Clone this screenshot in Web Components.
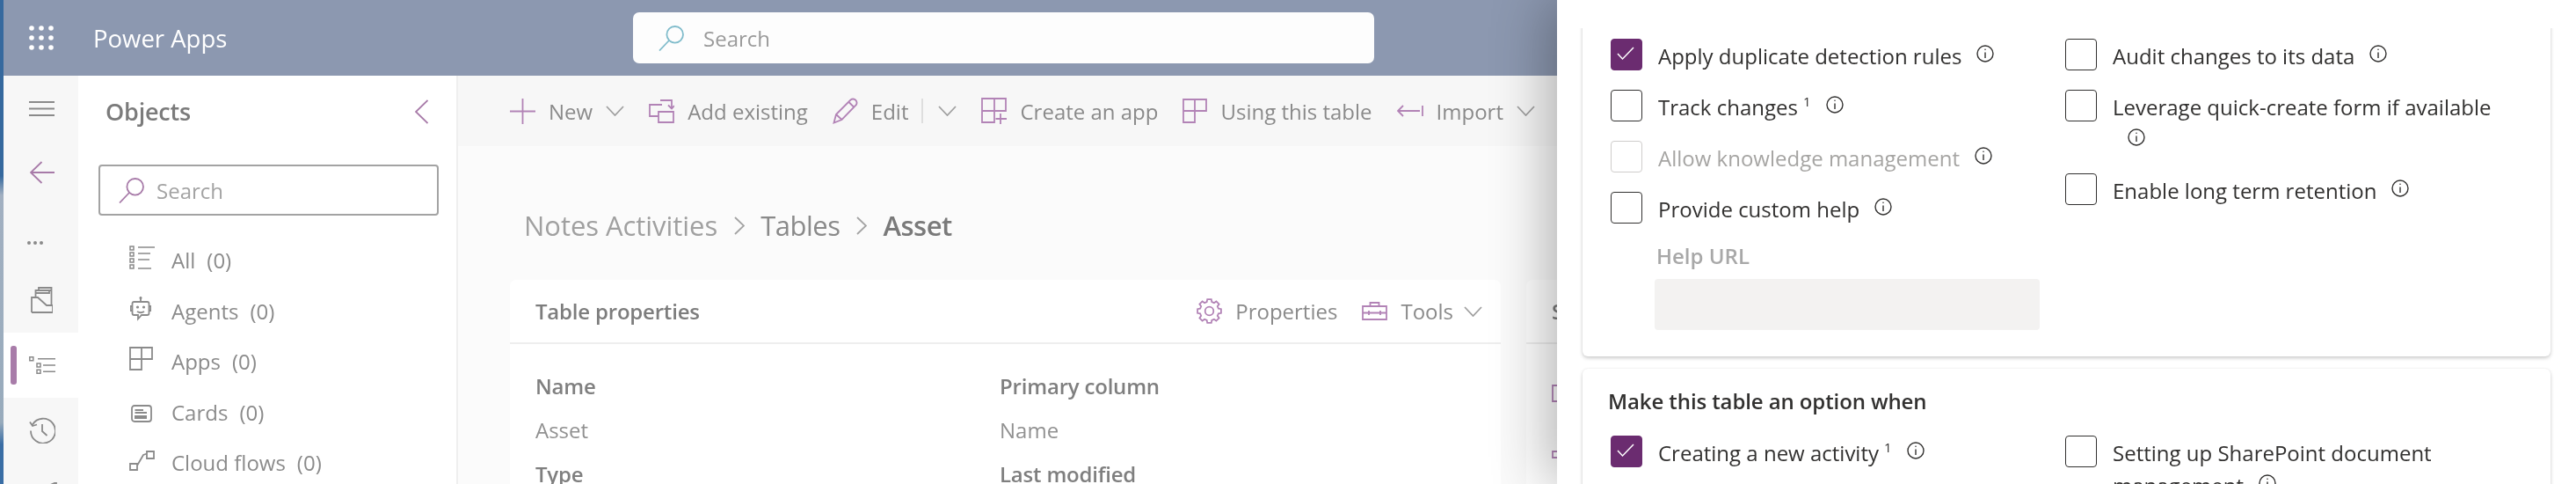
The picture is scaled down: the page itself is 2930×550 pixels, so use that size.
<!DOCTYPE html>
<html lang="en">
<head>
<meta charset="utf-8">
<title>Power Apps</title>
<style>
  html, body { margin: 0; height: 550px; overflow: hidden; background: #fbfbfb; }
  body { font-family: "Open Sans", "Noto Sans", sans-serif; }
</style>
</head>
<body>
<pa-app></pa-app>
<script>
// gear outline, 8 teeth
function gearPath() {
  const pts = [];
  for (let i = 0; i < 8; i++) {
    const a = (i / 8) * Math.PI * 2;
    [[-0.26, 10.8], [-0.17, 13.6], [0.17, 13.6], [0.26, 10.8]].forEach(([d, r]) => {
      pts.push((14.5 + Math.cos(a + d) * r).toFixed(1) + ' ' + (14.5 + Math.sin(a + d) * r).toFixed(1));
    });
  }
  return 'M' + pts.join('L') + 'Z';
}

const ICONS = {
  waffle: [28, 28, '<g fill="currentColor" stroke="none"><circle cx="3" cy="3" r="2.8"/><circle cx="14" cy="3" r="2.8"/><circle cx="25" cy="3" r="2.8"/><circle cx="3" cy="14" r="2.8"/><circle cx="14" cy="14" r="2.8"/><circle cx="25" cy="14" r="2.8"/><circle cx="3" cy="25" r="2.8"/><circle cx="14" cy="25" r="2.8"/><circle cx="25" cy="25" r="2.8"/></g>'],
  search: [29, 29, '<circle cx="18.7" cy="10.3" r="9.3"/><path d="M12 17 1 28.5"/>'],
  hamburger: [29, 17, '<path d="M0 1H29M0 8.5H29M0 16H29"/>'],
  back: [28, 26, '<path d="M13.500 1 1 13l12.500 12M1 13H28"/>'],
  chevronLeft: [15, 28, '<path d="M14.500 1 1 14l13.500 13"/>'],
  chevronRight: [12, 21, '<path d="M1 1l10 9.500L1 20"/>'],
  chevronDown: [21, 12, '<path d="M1 1l9.500 10L20 1"/>'],
  dots: [18, 4, '<g fill="currentColor" stroke="none"><circle cx="2" cy="2" r="2"/><circle cx="9" cy="2" r="2"/><circle cx="16" cy="2" r="2"/></g>'],
  stack: [25, 30, '<path d="M1 29V12H5.500V4H9V1H23.500V22M23.500 4H9M21 4V7H5.500M1 29H25V21H18L8 12H1"/>'],
  tree: [30, 20, '<path d="M.8 .8H4.800V4.800H.8ZM9 8H13V12H9ZM9 15.200H13V19.200H9ZM10 2.800H30M16 10H30M16 17.200H30" stroke-width="1.500"/>'],
  history: [30, 30, '<path d="M4 8.500A14 14 0 1 1 2 15.500M1 5.500 4 10 9 8.500M15 8V16L20.500 21"/>'],
  next: [12, 6, '<path d="M0 5 11 0V6"/>'],
  all: [29, 27, '<path d="M1 1H5V5H1ZM1 8H5V12H1ZM1 15H5V19H1ZM1 22H5V26H1ZM10 2H29M10 9H24M10 16H23M10 26H25" stroke-width="1.500"/>'],
  agent: [24, 29, '<path d="M12 .5V6M4.500 6H19.500Q21.500 6 21.500 8V19Q21.500 21 19.500 21H13L9 25.500V21H4.500Q2.500 21 2.500 19V8Q2.500 6 4.500 6ZM2 11H.500V16H2M22 11H23.500V16H22M8 17Q12 19.500 16 17"/><g fill="currentColor" stroke="none"><circle cx="8.500" cy="12" r="1.600"/><circle cx="15.500" cy="12" r="1.600"/><circle cx="12" cy="1.500" r="1.500"/></g>'],
  apps: [27, 27, '<path d="M1 1H26V14H14V26H1ZM14 1V14M1 14H14"/>'],
  cards: [24, 20, '<rect x="1" y="1" width="22" height="18" rx="3"/><path d="M4.500 6H14M4.500 9H18"/><rect x="4" y="12" width="14" height="4" fill="currentColor" stroke="none"/>'],
  flows: [29, 23, '<path d="M1 15H9V22H1ZM20 1H28V9H20ZM9 17 16 5 20 3.500"/>'],
  plus: [29, 29, '<path d="M0 14.500H29M14.500 0V29"/>'],
  addExisting: [29, 28, '<path d="M15 7H1V20H11M11 15H28V27H11ZM13 2H26V11M22 7.500l4 4 3-3.500"/>'],
  pencil: [29, 30, '<path d="M1.500 28.500 4 19 20.500 2.500Q23 0.500 26 2.500 28.500 5 27 8L10.500 25ZM18.500 5 24.500 11M4 19 10.500 25"/>'],
  createApp: [29, 30, '<path d="M1 1H28V15H15V28H1ZM15 1V15M1 15H15M22 18V30M16.500 24H29"/>'],
  usingTable: [28, 28, '<path d="M1 1H27V14H14V27H1ZM14 1V14M1 14H14"/>'],
  importArrow: [30, 14, '<path d="M7 1 1 7l6 6M1 7H26M29 1V13"/>'],
  gear: [29, 29, '<path d="' + gearPath() + '"/><circle cx="14.500" cy="14.500" r="4.800"/>'],
  tools: [29, 21, '<path d="M1 5H28V20H1ZM9.500 5V1H19.500V5M1 12.500H28M8 10V15M21 10V15"/>'],
  side: [6, 20, '<path d="M1 1H12V19H1Z"/>'],
  side2: [6, 9, '<path d="M1 1H12V8H1Z"/>']
};

const iconTemplate = document.createElement('template');
iconTemplate.innerHTML = `<style>
  :host { display: inline-flex; flex: none; line-height: 0; }
  svg { display: block; fill: none; stroke: currentColor; stroke-width: 1.800; overflow: hidden; }
</style><span id="slot"></span>`;

class PaIcon extends HTMLElement {
  constructor() {
    super();
    this.attachShadow({ mode: 'open' }).appendChild(iconTemplate.content.cloneNode(true));
  }

  connectedCallback() {
    const [w, h, body] = ICONS[this.getAttribute('name')];
    this.shadowRoot.getElementById('slot').innerHTML =
      `<svg width="${w}" height="${h}" viewBox="0 0 ${w} ${h}">${body}</svg>`;
  }
}
customElements.define('pa-icon', PaIcon);

const infoTemplate = document.createElement('template');
infoTemplate.innerHTML = `<style>
  :host { display: inline-block; width: 20px; height: 20px; margin-left: 17px; vertical-align: 2px; color: #323130; }
  svg { display: block; }
</style>
<svg width="20" height="20" viewBox="0 0 20 20" fill="none" stroke="currentColor" stroke-width="1.4">
  <circle cx="10" cy="10" r="9"/><path d="M10 8.500V15"/><circle cx="10" cy="5.300" r=".8" fill="currentColor" stroke="none"/>
</svg>`;

class PaInfo extends HTMLElement {
  constructor() {
    super();
    this.attachShadow({ mode: 'open' }).appendChild(infoTemplate.content.cloneNode(true));
  }
}
customElements.define('pa-info', PaInfo);

const checkTemplate = document.createElement('template');
checkTemplate.innerHTML = `<style>
  :host { display: flex; gap: 18px; color: #323130; font-size: var(--text, 24px); letter-spacing: var(--track, 0); }
  :host([disabled]) { color: #a6a5a3; }
  .box { flex: none; width: 36px; height: 36px; box-sizing: border-box; border: 1.600px solid #323130; border-radius: 4px; }
  :host([disabled]) .box { border-color: #cfcdcb; }
  :host([checked]) .box { background: #6b2c70; border-color: #6b2c70; }
  .box svg { display: none; }
  :host([checked]) .box svg { display: block; margin: -1.600px; }
  .label { flex: 1; line-height: 37px; padding-top: 1px; }
</style>
<div class="box"><svg width="36" height="36" viewBox="0 0 36 36" fill="none" stroke="#fff" stroke-width="1.500"><path d="M9 18l5.500 6L27 11"/></svg></div>
<div class="label"><slot></slot></div>`;

class PaCheck extends HTMLElement {
  constructor() {
    super();
    this.attachShadow({ mode: 'open' }).appendChild(checkTemplate.content.cloneNode(true));
  }
}
customElements.define('pa-check', PaCheck);

const topbarTemplate = document.createElement('template');
topbarTemplate.innerHTML = `<style>
  :host { display: flex; align-items: center; height: 86px; background: #8c98b0; color: #fff; padding-left: 29px; }
  .title { flex: 0 0 614px; margin-left: 45px; font-size: 27.500px; font-weight: 500; letter-spacing: var(--track, 0); }
  .search { display: flex; align-items: center; width: 843px; height: 58px; background: #fdfdfd; border-radius: 7px; color: #9a9a9a; font-size: var(--text, 24px); letter-spacing: var(--track, 0); padding-left: 29px; box-sizing: border-box; gap: 22px; }
  .search pa-icon { color: #80bccb; }
</style>
<pa-icon name="waffle"></pa-icon>
<div class="title">Power Apps</div>
<div class="search"><pa-icon name="search"></pa-icon><span>Search</span></div>`;

class PaTopbar extends HTMLElement {
  constructor() {
    super();
    this.attachShadow({ mode: 'open' }).appendChild(topbarTemplate.content.cloneNode(true));
  }
}
customElements.define('pa-topbar', PaTopbar);

const railTemplate = document.createElement('template');
railTemplate.innerHTML = `<style>
  :host { display: flex; flex-direction: column; flex: 0 0 85px; background: #f7f7f7; color: #8a8a8a; overflow: hidden; }
  .cell { position: relative; display: flex; align-items: center; justify-content: center; height: 74px; padding-left: 2px; flex: none; }
  .back { height: 72px; color: #a77aa8; }
  .more { height: 72px; padding: 16px 13px 0 0; box-sizing: border-box; }
  .active { background: #fff; }
  .active::before { content: ''; position: absolute; left: 8px; top: 15px; width: 7px; height: 44px; border-radius: 3px; background: #a87ca9; }
  .last { justify-content: flex-end; align-items: flex-start; padding: 22px 24px 0 0; box-sizing: border-box; }
</style>
<div class="cell"><pa-icon name="hamburger"></pa-icon></div>
<div class="cell back"><pa-icon name="back"></pa-icon></div>
<div class="cell more"><pa-icon name="dots"></pa-icon></div>
<div class="cell"><pa-icon name="stack"></pa-icon></div>
<div class="cell active"><pa-icon name="tree"></pa-icon></div>
<div class="cell"><pa-icon name="history"></pa-icon></div>
<div class="cell last"><pa-icon name="next"></pa-icon></div>`;

class PaRail extends HTMLElement {
  constructor() {
    super();
    this.attachShadow({ mode: 'open' }).appendChild(railTemplate.content.cloneNode(true));
  }
}
customElements.define('pa-rail', PaRail);

const objectRowTemplate = document.createElement('template');
objectRowTemplate.innerHTML = `<style>
  :host { display: flex; align-items: center; height: 57.500px; flex: none; padding-left: 58px; color: #8b8b8b; font-size: var(--text, 24px); letter-spacing: var(--track, 0); }
  .ico { flex: 0 0 48px; display: flex; }
  .count { margin-left: 13px; }
</style>
<div class="ico" id="ico"></div><span><slot></slot></span><span class="count" id="count"></span>`;

class PaObjectRow extends HTMLElement {
  constructor() {
    super();
    this.attachShadow({ mode: 'open' }).appendChild(objectRowTemplate.content.cloneNode(true));
  }

  connectedCallback() {
    const shadow = this.shadowRoot;
    const nudge = `translate(${this.getAttribute('nudge-x') || 0}px, ${this.getAttribute('nudge') || 0}px)`;
    shadow.getElementById('ico').innerHTML = `<pa-icon name="${this.getAttribute('icon')}" style="transform:${nudge}"></pa-icon>`;
    shadow.getElementById('count').textContent = `(${this.getAttribute('count')})`;
  }
}
customElements.define('pa-object-row', PaObjectRow);

const objectsTemplate = document.createElement('template');
objectsTemplate.innerHTML = `<style>
  :host { display: flex; flex-direction: column; flex: 0 0 430px; background: #fff; border-right: 2px solid #efefef; overflow: hidden; }
  .head { display: flex; align-items: center; justify-content: space-between; height: 101px; padding: 0 32px 20px 31px; box-sizing: border-box; flex: none; }
  .head span { font-size: 27px; font-weight: 600; color: #7b7b7b; letter-spacing: -.2px; }
  .head pa-icon { color: #a77aa8; }
  .search { display: flex; align-items: center; gap: 14px; width: 387px; height: 58px; flex: none; box-sizing: border-box; margin: 0 0 22px 23px; padding-left: 21px; border: 2px solid #a3a3a3; border-radius: 4px; color: #a3a3a3; font-size: var(--text, 24px); letter-spacing: var(--track, 0); }
  .search pa-icon { color: #a77aa8; }
</style>
<div class="head"><span>Objects</span><pa-icon name="chevronLeft"></pa-icon></div>
<div class="search"><pa-icon name="search"></pa-icon><span>Search</span></div>
<slot></slot>`;

class PaObjects extends HTMLElement {
  constructor() {
    super();
    this.attachShadow({ mode: 'open' }).appendChild(objectsTemplate.content.cloneNode(true));
  }
}
customElements.define('pa-objects', PaObjects);

const commandTemplate = document.createElement('template');
commandTemplate.innerHTML = `<style>
  :host { display: inline-flex; align-items: center; gap: 15px; flex: none; color: #8a8a8a; font-size: var(--text, 24px); letter-spacing: var(--track, 0); }
  #ico { color: #b283b6; display: flex; }
  .chev { color: #a0a0a0; display: flex; }
  .split { width: 2px; height: 28px; background: #dedede; margin-right: 2px; }
</style>
<span id="ico"></span><span><slot></slot></span><span id="tail" style="display:contents"></span>`;

class PaCommand extends HTMLElement {
  constructor() {
    super();
    this.attachShadow({ mode: 'open' }).appendChild(commandTemplate.content.cloneNode(true));
  }

  connectedCallback() {
    const shadow = this.shadowRoot;
    shadow.getElementById('ico').innerHTML = `<pa-icon name="${this.getAttribute('icon')}"></pa-icon>`;
    const tail = shadow.getElementById('tail');
    let html = '';
    if (this.hasAttribute('split')) html += '<span class="split"></span>';
    if (this.hasAttribute('menu')) html += '<span class="chev"><pa-icon name="chevronDown"></pa-icon></span>';
    tail.innerHTML = html;
  }
}
customElements.define('pa-command', PaCommand);

const commandBarTemplate = document.createElement('template');
commandBarTemplate.innerHTML = `<style>
  :host { display: flex; align-items: center; gap: 28px; height: 80px; flex: none; padding-left: 59px; background: #f7f7f7; }
</style><slot></slot>`;

class PaCommandBar extends HTMLElement {
  constructor() {
    super();
    this.attachShadow({ mode: 'open' }).appendChild(commandBarTemplate.content.cloneNode(true));
  }
}
customElements.define('pa-command-bar', PaCommandBar);

const crumbsTemplate = document.createElement('template');
crumbsTemplate.innerHTML = `<style>
  :host { display: flex; align-items: center; gap: 18.500px; height: 152px; flex: none; padding: 28px 0 0 16px; box-sizing: border-box; font-size: 31px; color: #a0a0a0; letter-spacing: -.05px; }
  pa-icon { color: #a3a3a3; }
  .mid { color: #8a8a8a; letter-spacing: -.5px; }
  .cur { color: #7a7a7a; font-weight: 600; letter-spacing: -.5px; }
</style>
<span>Notes Activities</span><pa-icon name="chevronRight"></pa-icon>
<span class="mid">Tables</span><pa-icon name="chevronRight"></pa-icon>
<span class="cur">Asset</span>`;

class PaCrumbs extends HTMLElement {
  constructor() {
    super();
    this.attachShadow({ mode: 'open' }).appendChild(crumbsTemplate.content.cloneNode(true));
  }
}
customElements.define('pa-crumbs', PaCrumbs);

const cardTemplate = document.createElement('template');
cardTemplate.innerHTML = `<style>
  :host { display: block; flex: none; background: #fff; border-radius: 7px 7px 0 0; overflow: hidden; color: #8a8a8a; font-size: var(--text, 24px); letter-spacing: var(--track, 0); }
  .head { display: flex; align-items: center; justify-content: space-between; height: 73px; box-sizing: border-box; padding: 0 21px 0 29px; border-bottom: 2px solid #eee; }
  .title { font-weight: 600; color: #7d7d7d; letter-spacing: -.2px; }
  .actions { display: flex; align-items: center; }
  .body { padding: 23px 29px 0; }
</style>
<div class="head"><span class="title"><slot name="title"></slot></span><span class="actions"><slot name="actions"></slot></span></div>
<div class="body"><slot></slot></div>`;

class PaCard extends HTMLElement {
  constructor() {
    super();
    this.attachShadow({ mode: 'open' }).appendChild(cardTemplate.content.cloneNode(true));
  }
}
customElements.define('pa-card', PaCard);

const propTemplate = document.createElement('template');
propTemplate.innerHTML = `<style>
  :host { display: block; line-height: 50px; }
  b { display: block; font-weight: 600; color: #7f7f7f; letter-spacing: -.2px; }
  span { color: #919191; }
</style><b id="k"></b><span id="v"></span>`;

class PaProp extends HTMLElement {
  constructor() {
    super();
    this.attachShadow({ mode: 'open' }).appendChild(propTemplate.content.cloneNode(true));
  }

  connectedCallback() {
    this.shadowRoot.getElementById('k').textContent = this.getAttribute('label');
    this.shadowRoot.getElementById('v').textContent = this.getAttribute('value') || '';
  }
}
customElements.define('pa-prop', PaProp);

const sideTemplate = document.createElement('template');
sideTemplate.innerHTML = `<style>
  :host { position: absolute; top: 0; left: 1771px; right: 0; bottom: 0; z-index: 5; background: #fff; box-shadow: -8px 0 62px rgba(0,0,0,.32); padding-top: 32px; box-sizing: border-box; }
  .scroll { height: 100%; overflow: hidden; padding: 0 29px; }
  .section { background: #fff; border-radius: 6px; box-shadow: 0 2px 4px rgba(0,0,0,.2), 0 0 2px rgba(0,0,0,.07); padding: 22px 0 30px 32px; margin-top: -10px; margin-bottom: 14px; }
  .section + .section { margin-top: 0; padding-top: 20px; border-radius: 6px 6px 0 0; }
  h3 { margin: 0 0 23px -3px; font-size: var(--text, 24px); line-height: 33px; font-weight: 600; color: #323130; letter-spacing: -.1px; }
  .cols { display: grid; grid-template-columns: 517px 506px; }
  .col { display: flex; flex-direction: column; gap: 20px; }
  .url { margin: 0 0 0 50px; width: 438px; }
  .url label { display: block; margin: 0 0 11px 2px; line-height: 30px; font-size: var(--text, 24px); font-weight: 600; color: #a8a8a8; letter-spacing: var(--track, 0); }
  .url div { height: 58px; background: #f3f2f1; border-radius: 4px; }
  sup { font-size: 15px; line-height: 0; vertical-align: 10px; margin-left: 6px; }
</style>
<div class="scroll">
  <div class="section">
    <div class="cols">
      <div class="col">
        <pa-check checked>Apply duplicate detection rules<pa-info></pa-info></pa-check>
        <pa-check>Track changes<sup>1</sup><pa-info></pa-info></pa-check>
        <pa-check disabled>Allow knowledge management<pa-info></pa-info></pa-check>
        <pa-check>Provide custom help<pa-info></pa-info></pa-check>
        <div class="url"><label>Help URL</label><div></div></div>
      </div>
      <div class="col">
        <pa-check>Audit changes to its data<pa-info></pa-info></pa-check>
        <pa-check>Leverage quick-create form if available<pa-info></pa-info></pa-check>
        <pa-check>Enable long term retention<pa-info></pa-info></pa-check>
      </div>
    </div>
  </div>
  <div class="section">
    <h3>Make this table an option when</h3>
    <div class="cols">
      <div class="col">
        <pa-check checked>Creating a new activity<sup>1</sup><pa-info></pa-info></pa-check>
      </div>
      <div class="col">
        <pa-check>Setting up SharePoint document management<pa-info></pa-info></pa-check>
      </div>
    </div>
  </div>
</div>`;

class PaSidePanel extends HTMLElement {
  constructor() {
    super();
    this.attachShadow({ mode: 'open' }).appendChild(sideTemplate.content.cloneNode(true));
  }
}
customElements.define('pa-side-panel', PaSidePanel);

const appTemplate = document.createElement('template');
appTemplate.innerHTML = `<style>
  :host { --text: 24px; --track: 0px; position: relative; display: flex; width: 2930px; height: 550px; overflow: hidden; background: #fbfbfb; filter: blur(.35px); }
  .wallpaper { flex: 0 0 4px; background: linear-gradient(180deg, #36699e 0, #36699e 200px, #a2b0c1 222px, #98abbc 480px, #3a6ea5 505px); }
  .frame { flex: 1; min-width: 0; display: flex; flex-direction: column; }
  .below { flex: 1; min-height: 0; display: flex; }
  .main { flex: 1; min-width: 0; display: flex; flex-direction: column; }
  .page { flex: 1; padding-left: 59px; display: flex; flex-direction: column; overflow: hidden; }
  .cards { display: flex; gap: 29px; }
  .props { display: grid; grid-template-columns: 528px 1fr; }
  pa-card.first { width: 1127px; height: 240px; }
  pa-card.second { width: 400px; height: 240px; }
  .act { display: inline-flex; align-items: center; gap: 15px; }
  .act pa-icon { color: #b283b6; }
  .act + .act { margin-left: 28px; }
  .act pa-icon.chev { color: #a0a0a0; margin-left: -3px; }
  .peek { display: flex; flex-direction: column; gap: 55px; color: #b283b6; margin-top: 23px; }
</style>
<div class="wallpaper"></div>
<div class="frame">
  <pa-topbar></pa-topbar>
  <div class="below">
    <pa-rail></pa-rail>
    <pa-objects>
      <pa-object-row icon="all" count="0" nudge="-3">All</pa-object-row>
      <pa-object-row icon="agent" count="0" nudge="-2" nudge-x="1">Agents</pa-object-row>
      <pa-object-row icon="apps" count="0" nudge="-3">Apps</pa-object-row>
      <pa-object-row icon="cards" count="0" nudge="2" nudge-x="2">Cards</pa-object-row>
      <pa-object-row icon="flows" count="0" nudge="-2">Cloud flows</pa-object-row>
    </pa-objects>
    <div class="main">
      <pa-command-bar>
        <pa-command icon="plus" menu>New</pa-command>
        <pa-command icon="addExisting">Add existing</pa-command>
        <pa-command icon="pencil" split menu>Edit</pa-command>
        <pa-command icon="createApp">Create an app</pa-command>
        <pa-command icon="usingTable">Using this table</pa-command>
        <pa-command icon="importArrow" menu>Import</pa-command>
      </pa-command-bar>
      <div class="page">
        <pa-crumbs></pa-crumbs>
        <div class="cards">
          <pa-card class="first">
            <span slot="title">Table properties</span>
            <span slot="actions" class="act"><pa-icon name="gear"></pa-icon>Properties</span>
            <span slot="actions" class="act"><pa-icon name="tools"></pa-icon>Tools<pa-icon class="chev" name="chevronDown"></pa-icon></span>
            <div class="props">
              <pa-prop label="Name" value="Asset"></pa-prop>
              <pa-prop label="Primary column" value="Name"></pa-prop>
              <pa-prop label="Type"></pa-prop>
              <pa-prop label="Last modified"></pa-prop>
            </div>
          </pa-card>
          <pa-card class="second">
            <span slot="title">Schema</span>
            <div class="peek"><pa-icon name="side"></pa-icon><pa-icon name="side2"></pa-icon></div>
          </pa-card>
        </div>
      </div>
    </div>
  </div>
</div>
<pa-side-panel></pa-side-panel>`;

class PaApp extends HTMLElement {
  constructor() {
    super();
    this.attachShadow({ mode: 'open' }).appendChild(appTemplate.content.cloneNode(true));
  }
}
customElements.define('pa-app', PaApp);
</script>
</body>
</html>
